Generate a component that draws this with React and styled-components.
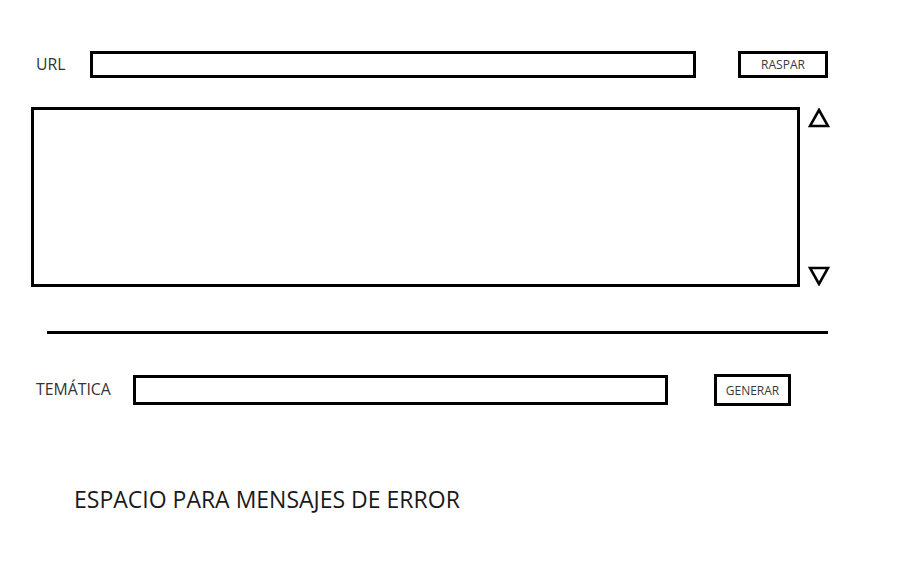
import React from "react";
import styled, { createGlobalStyle } from "styled-components";

const Global = createGlobalStyle`
  html, body { margin: 0; padding: 0; background: #fff; }
  body { font-family: "Open Sans", "Noto Sans", sans-serif; color: #262626; }
`;

const Page = styled.div`
  width: 900px;
  height: 574px;
  box-sizing: border-box;
  padding-top: 51px;
  display: flex;
  flex-direction: column;
  overflow: hidden;
`;

const FormRow = styled.div`
  display: flex;
  align-items: center;
  height: ${(p) => p.$h}px;
  margin-top: ${(p) => p.$mt || 0}px;
`;

const Label = styled.span`
  font-size: 15.8px;
  color: #333;
  width: ${(p) => p.$w}px;
  padding-left: 36px;
  box-sizing: border-box;
  flex: none;
  line-height: 1;
`;

const TextInput = styled.div`
  box-sizing: border-box;
  border: 3px solid #000;
  width: ${(p) => p.$w}px;
  height: ${(p) => p.$h}px;
  flex: none;
`;

const Button = styled.button`
  box-sizing: border-box;
  border: 3px solid #000;
  background: #fff;
  width: ${(p) => p.$w}px;
  height: ${(p) => p.$h}px;
  margin-left: ${(p) => p.$ml}px;
  font-family: "Open Sans", "Noto Sans", sans-serif;
  font-size: 12px;
  color: #3a3a3a;
  padding: 0;
  flex: none;
  display: flex;
  align-items: center;
  justify-content: center;
`;

const PanelRow = styled.div`
  display: flex;
  margin-top: 29px;
  padding-left: 31px;
`;

const TextArea = styled.div`
  box-sizing: border-box;
  border: 3px solid #000;
  width: 769px;
  height: 180px;
  flex: none;
`;

const Arrows = styled.div`
  display: flex;
  flex-direction: column;
  justify-content: space-between;
  margin-left: 8px;
  padding-top: 1px;
  height: 179px;
  box-sizing: border-box;
`;

const Divider = styled.hr`
  border: none;
  height: 3px;
  background: #000;
  width: 781px;
  margin: 44px 0 0 47px;
`;

const ErrorText = styled.div`
  margin-top: 82px;
  padding-left: 74px;
  font-size: 23px;
  color: #1a1a1a;
  line-height: 1;
`;

const Triangle = ({ down }) => (
  <svg width="22" height="20" viewBox="0 0 22 20">
    {down ? (
      <polygon points="2,2 20,2 11,18" fill="none" stroke="#000" strokeWidth="2.6" strokeLinejoin="miter" />
    ) : (
      <polygon points="11,2 20,18 2,18" fill="none" stroke="#000" strokeWidth="2.6" strokeLinejoin="miter" />
    )}
  </svg>
);

export default function App() {
  return (
    <>
      <Global />
      <Page>
        <FormRow $h={27}>
          <Label $w={90}>URL</Label>
          <TextInput $w={606} $h={27} />
          <Button $w={90} $h={27} $ml={42}>RASPAR</Button>
        </FormRow>
        <PanelRow>
          <TextArea />
          <Arrows>
            <Triangle />
            <Triangle down />
          </Arrows>
        </PanelRow>
        <Divider />
        <FormRow $h={32} $mt={40}>
          <Label $w={133}>TEMÁTICA</Label>
          <TextInput $w={535} $h={30} />
          <Button $w={77} $h={32} $ml={46}>GENERAR</Button>
        </FormRow>
        <ErrorText>ESPACIO PARA MENSAJES DE ERROR</ErrorText>
      </Page>
    </>
  );
}
